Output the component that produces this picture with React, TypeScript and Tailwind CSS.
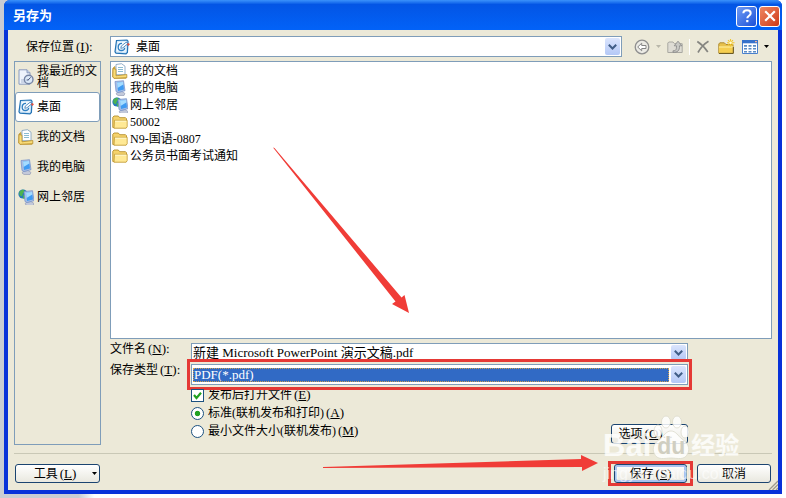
import type { ReactNode } from 'react'
import clsx from 'clsx'

type IconName = 'recent' | 'desktop' | 'documents' | 'computer' | 'network' | 'folder'

const PLACES: { icon: IconName; label: string }[] = [
  { icon: 'recent', label: '我最近的文档' },
  { icon: 'desktop', label: '桌面' },
  { icon: 'documents', label: '我的文档' },
  { icon: 'computer', label: '我的电脑' },
  { icon: 'network', label: '网上邻居' },
]

const FILES: { icon: IconName; label: string }[] = [
  { icon: 'documents', label: '我的文档' },
  { icon: 'computer', label: '我的电脑' },
  { icon: 'network', label: '网上邻居' },
  { icon: 'folder', label: '50002' },
  { icon: 'folder', label: 'N9-国语-0807' },
  { icon: 'folder', label: '公务员书面考试通知' },
]

function Monitor() {
  return (
    <>
      <path d="M5 12.5l5-1 3 2-1 2H6l-2-1.5z" fill="#c3c9da" stroke="#8b93b0" strokeWidth=".6" />
      <path d="M3 1.5l8.5-.8 1.5 10-7 1.8-2-1z" fill="#a9bfe6" stroke="#6d8cc8" strokeWidth=".7" />
      <path d="M5 2.5l6-.6 1 7.7-6 1.3z" fill="#3f9bf2" />
      <path d="M5 2.5l6-.6.3 2.6L5.5 8z" fill="#a5dcff" />
    </>
  )
}

function Icon({ name }: { name: IconName }) {
  return (
    <svg aria-hidden="true" viewBox="0 0 16 16" className="size-4 shrink-0">
      {name === 'recent' && (
        <>
          <path d="M1 .8h8l3 3v11.4H1z" fill="#eef3fc" stroke="#8a9bbd" />
          <path d="M9 .8v3h3" fill="#c7d3ea" stroke="#8a9bbd" />
          <path d="M3 11h4M3 13h4" stroke="#a8b6d1" />
          <circle cx="10.7" cy="10.5" r="4.3" fill="#dce9f8" stroke="#7685a5" strokeWidth="1.4" />
          <path d="M10.2 11l2.4-2.6M10.5 11H8.6" stroke="#47557a" fill="none" />
        </>
      )}
      {name === 'desktop' && (
        <>
          <path d="M2.5 1.5L13 1l1 1.2-.6 11.3-1.4 1.3-10-.6L1 12.8z" fill="#cfe6f8" stroke="#2373b5" strokeWidth="1.2" />
          <path d="M3.7 3l8.4-.5-.5 10.2-8.8-.4z" fill="#f4fafe" />
          <path d="M8 4.4C5.2 4.3 4.2 6.2 4.2 8.2c0 2 1.3 3.3 3.2 3.3s3.2-1 3.3-2.8" fill="none" stroke="#2f7fc2" strokeWidth="1.3" />
          <path d="M6.8 9.3l.5-2.2 5-4 1.4 1.7-4.8 4z" fill="#fff" stroke="#2e73b4" strokeWidth=".8" />
          <path d="M12.8 5l2-1 1.1 1.6-1.7 1.4z" fill="#df5043" />
        </>
      )}
      {name === 'documents' && (
        <>
          <path d="M1 5l2-1.5V13l11 .5v1.7H2L.8 14z" fill="#f0c64c" stroke="#b48a24" strokeWidth=".7" />
          <path d="M4 1.5L9.5.7 13 3.2v8.5H4z" fill="#fff" stroke="#7b9dbc" strokeWidth=".8" />
          <path d="M6 4.5h5M6 6.5h5M6 8.5h5" stroke="#6dabc7" strokeWidth=".8" />
          <path d="M1 5.5l3 .8v6.5l10.8-1.3v3.2L2 15.3.8 14z" fill="#f9dc78" stroke="#b68e2c" strokeWidth=".8" />
        </>
      )}
      {name === 'computer' && <Monitor />}
      {name === 'network' && (
        <>
          <circle cx="5" cy="5" r="4.6" fill="#2678bd" />
          <path d="M1.5 2.3L5 .6l2 1.6-2 2-1 3.2L1.3 6zM5 6l3 1-1 2.4-2 .2z" fill="#4cb450" />
          <g transform="translate(3 1)"><Monitor /></g>
        </>
      )}
      {name === 'folder' && (
        <>
          <path d="M.8 13.5V3.2L2 2h4.3l1.4 1.7h5.8l1 1v9H2z" fill="#f5d36c" stroke="#b58e2b" strokeWidth=".9" />
          <path d="M2.5 6.3h12.7v6.5L14 14.2H2z" fill="#ffe995" stroke="#c19a35" strokeWidth=".8" />
          <path d="M3 7.2h11.3" stroke="#fff8cf" />
        </>
      )}
    </svg>
  )
}

// Accelerator letter shown after a label, e.g. (N)
function Key({ children, tail = '' }: { children: string; tail?: string }) {
  return (
    <span className="pl-0.5 text-[13px]">
      (<span className="underline underline-offset-1">{children}</span>){tail}
    </span>
  )
}

function Chevron() {
  return (
    <span className="pointer-events-none flex w-[15px] shrink-0 items-center justify-center self-stretch rounded-xs bg-linear-to-b from-[#dbe5fd] to-[#b4c8f6]">
      <svg aria-hidden="true" viewBox="0 0 9 6" className="h-[6px] w-[9px]">
        <path d="M.8.8l3.7 3.7L8.2.8" fill="none" stroke="#405d86" strokeWidth="2" />
      </svg>
    </span>
  )
}

function XpButton({ className, children }: { className?: string; children: ReactNode }) {
  return (
    <button
      type="button"
      className={clsx(
        'flex items-center justify-center rounded-[3px] border border-[#1b4470] bg-linear-to-b from-white to-[#e9e8df] leading-4',
        className,
      )}
    >
      {children}
    </button>
  )
}

function DownArrow({ className }: { className?: string }) {
  return (
    <svg aria-hidden="true" viewBox="0 0 5 3" className={clsx('h-[3px] w-[5px] shrink-0', className)}>
      <path d="M0 0h5L2.5 3z" fill="currentColor" />
    </svg>
  )
}

function TitleBar() {
  return (
    <header className="flex h-[30px] items-center justify-between rounded-t-md bg-linear-to-b from-[#3b92fb] via-[#0355e5] via-15% to-[#0262f8] pr-0.5 pl-[9px]">
      <h1 className="pt-0.5 text-[13px] leading-4 font-bold text-white">另存为</h1>
      <div className="flex gap-0.5 pt-0.5">
        <button type="button" aria-label="帮助" className="flex size-[21px] items-center justify-center rounded-[3px] border border-white bg-linear-to-br from-[#6f9af3] to-[#1c4fd8]">
          <svg aria-hidden="true" viewBox="0 0 12 14" className="h-[14px] w-3">
            <path d="M2.3 4.2C2.4 2 4 1.2 6 1.2s3.7 1.1 3.7 3c0 2.6-3.4 2.5-3.4 5.1" fill="none" stroke="#fff" strokeWidth="2" />
            <path d="M5.2 11h2.2v2.2H5.2z" fill="#fff" />
          </svg>
        </button>
        <button type="button" aria-label="关闭" className="flex size-[21px] items-center justify-center rounded-[3px] border border-white bg-linear-to-br from-[#ee8661] to-[#cf3610]">
          <svg aria-hidden="true" viewBox="0 0 12 12" className="size-3">
            <path d="M1.2 1.2l9.6 9.6M10.8 1.2l-9.6 9.6" stroke="#fff" strokeWidth="2.2" />
          </svg>
        </button>
      </div>
    </header>
  )
}

function Toolbar() {
  return (
    <div className="flex w-[150px] shrink-0 items-center pl-3">
      <button type="button" aria-label="后退" className="flex items-center gap-1.5 text-[#b9b7aa]">
        <svg aria-hidden="true" viewBox="0 0 16 16" className="size-4">
          <circle cx="8" cy="8" r="6.8" fill="#ecebe5" stroke="#8f8f8f" strokeWidth="1.3" />
          <path d="M3.7 8l4-3.8v2.3H12v3H7.7v2.3z" fill="#fff" stroke="#858585" />
        </svg>
        <DownArrow />
      </button>
      <button type="button" aria-label="向上一级" className="ml-1.5">
        <svg aria-hidden="true" viewBox="0 0 16 16" className="size-4">
          <path d="M.8 13.5V4l1-1H6l1.5 1.7h7.7v8.8z" fill="#dedcd4" stroke="#a9a8a2" />
          <path d="M6 11.8c3 0 3.5-1 3.5-5H7.2L11 2.2l3.8 4.6h-2.3c.2 5-2 6.7-6.5 6.5z" fill="#c8c8c4" stroke="#858585" strokeWidth=".8" />
        </svg>
      </button>
      <span className="ml-1.5 h-4 w-px bg-white" />
      <button type="button" aria-label="删除" className="ml-1.5">
        <svg aria-hidden="true" viewBox="0 0 14 14" className="size-3.5">
          <path d="M1.3 1.5c4 2.5 7.5 6 10.5 10.5M12.5 1.3C8 4 4.5 8 2 12.5" fill="none" stroke="#858580" strokeWidth="1.7" />
        </svg>
      </button>
      <button type="button" aria-label="新建文件夹" className="ml-2">
        <svg aria-hidden="true" viewBox="0 0 17 16" className="h-4 w-[17px]">
          <path d="M.8 14.2V5l1-1.2h4.5L8 5.5h7v8.7z" fill="#e7c14c" stroke="#b08c30" />
          <path d="M1 7.5h14.3v7H1z" fill="#f5ce50" />
          <path d="M1 8h14" stroke="#fff1a4" />
          <path d="M1 14.4h14.3V8" fill="none" stroke="#61511f" />
          <path d="M12.5 0v7.5M9 3.7h7.5M10 1.2l5 5M15 1.2l-5 5" stroke="#f1c62c" strokeWidth="1.1" />
          <circle cx="12.5" cy="3.7" r="1.3" fill="#fffbd7" />
        </svg>
      </button>
      <button type="button" aria-label="视图" className="ml-[7px] flex items-center gap-1.5 text-black">
        <svg aria-hidden="true" viewBox="0 0 16 14" className="h-[14px] w-4">
          <path d="M.5.5h15v13H.5z" fill="#fff" stroke="#4a80cc" />
          <path d="M0 0h16v3.3H0z" fill="#3672cb" />
          <path d="M13 1h2v1.3h-2z" fill="#f3b39b" />
          <path d="M2 5h3v1.8H2zM6.500 5h3v1.8h-3zM11 5h3v1.8h-3zM2 8h3v1.6H2zM6.500 8h3v1.6h-3zM11 8h3v1.6h-3zM2 11h3v1.5H2zM6.500 11h3v1.5h-3zM11 11h3v1.5h-3z" fill="#5a8cc4" />
        </svg>
        <DownArrow />
      </button>
    </div>
  )
}

function Watermark() {
  return (
    <div aria-hidden="true" className="pointer-events-none absolute right-[43px] bottom-[14px] w-[140px] font-['Liberation_Sans','Noto_Sans_CJK_SC',sans-serif] text-white/80">
      <div className="flex items-end pb-1">
        <span className="text-[31px] leading-7 font-bold">Bai</span>
        <span className="relative flex h-[45px] w-[40px] items-end justify-center">
          <svg viewBox="0 0 40 45" className="absolute inset-0 size-full">
            <g fill="#fff" fillOpacity=".85" stroke="#dcdacb" strokeWidth=".8">
              <ellipse cx="7" cy="16" rx="4" ry="6" />
              <ellipse cx="15" cy="7" rx="4.500" ry="6" />
              <ellipse cx="26" cy="7" rx="4.500" ry="6" />
              <ellipse cx="34" cy="17" rx="4" ry="6" />
              <path d="M20 16c5 0 7 5 11 8 6 4 8 9 6 14-3 8-11 5-17 5s-14 3-17-5c-2-5 0-10 6-14 4-3 6-8 11-8z" />
            </g>
          </svg>
          <span className="relative pb-1 text-[23px] leading-5 font-bold text-[#d0cec0]">du</span>
        </span>
        <span className="text-[24px] leading-7 font-bold">经验</span>
      </div>
      <div className="text-[16px] leading-5 text-white/60">jingyan.baidu.com</div>
    </div>
  )
}

export default function App() {
  return (
    <div className="relative flex min-h-screen flex-col bg-linear-to-r from-[#c9ccd3] from-10% to-white to-12% px-1 pb-1 font-['Liberation_Serif','Noto_Sans_CJK_SC',sans-serif] text-[12px] text-black">
      <main className="flex flex-1 flex-col rounded-t-md bg-[#0831d9]">
        <TitleBar />
        <div className="relative mx-1 mb-1 flex flex-1 flex-col bg-[#ece9d8] px-1.5 pt-1.5 pb-[7px]">
          <div className="flex h-[21px] items-center">
            <label htmlFor="location" className="w-24 shrink-0 pl-3 leading-4">
              保存位置<Key tail=":">I</Key>
            </label>
            <div className="flex h-[21px] min-w-0 flex-1 items-center border border-[#7f9db9] bg-white p-px pl-[3px]">
              <Icon name="desktop" />
              <select id="location" className="min-w-0 flex-1 appearance-none pl-1.5 leading-4 outline-none">
                <option>桌面</option>
              </select>
              <Chevron />
            </div>
            <Toolbar />
          </div>

          <div className="mt-1 flex flex-1 gap-[9px]">
            <nav className="w-[87px] shrink-0 border border-[#7f9db9]">
              {PLACES.map(({ icon, label }) => (
                <button
                  key={icon}
                  type="button"
                  className={clsx(
                    'flex h-[30px] w-full items-center gap-[3px] rounded-[3px] border pl-0.5 text-left leading-3',
                    icon === 'desktop' ? 'border-[#7f9db9] bg-white' : 'border-transparent',
                  )}
                >
                  <Icon name={icon} />
                  <span>{label}</span>
                </button>
              ))}
            </nav>

            <div className="flex min-w-0 flex-1 flex-col">
              <ul className="flex-1 border border-[#7f9db9] bg-white pl-px">
                {FILES.map(({ icon, label }) => (
                  <li key={label} className="flex h-[17px] items-center gap-0.5 leading-4">
                    <Icon name={icon} />
                    {label}
                  </li>
                ))}
              </ul>

              <div className="mt-1 flex items-start pr-[84px]">
                <label htmlFor="filename" className="w-[81px] shrink-0 leading-3">
                  文件名<Key tail=":">N</Key>
                </label>
                <div className="flex h-[19px] min-w-0 flex-1 border border-[#7f9db9] bg-white p-px">
                  <input id="filename" defaultValue="新建 Microsoft PowerPoint 演示文稿.pdf" className="min-w-0 flex-1 text-[13px] leading-4 outline-none" />
                  <Chevron />
                </div>
              </div>

              <div className="mt-0.5 flex items-start pr-[84px]">
                <label htmlFor="filetype" className="w-[81px] shrink-0 leading-3">
                  保存类型<Key tail=":">T</Key>
                </label>
                <div className="relative flex h-[21px] min-w-0 flex-1 items-center gap-0.5 border border-[#7f9db9] bg-white p-px">
                  <select id="filetype" className="h-[14px] min-w-0 flex-1 appearance-none border border-dotted border-[#d0a050] bg-[#316ac5] text-[13px] leading-3 text-white outline-none">
                    <option>PDF(*.pdf)</option>
                  </select>
                  <Chevron />
                  <span className="pointer-events-none absolute -inset-x-[5px] -inset-y-1.5 border-3 border-[#e53935]" />
                </div>
              </div>

              <div className="mt-px mb-px flex items-end justify-between pr-[84px] pl-[81px]">
                <div className="pb-1">
                  <label className="flex h-[18px] items-center gap-1">
                    <span className="relative flex size-[13px]">
                      <input type="checkbox" defaultChecked className="peer size-[13px] appearance-none border border-[#1c5180] bg-white" />
                      <svg aria-hidden="true" viewBox="0 0 13 13" className="pointer-events-none absolute inset-0 hidden peer-checked:block">
                        <path d="M3 6l2.5 3L10 3.8" fill="none" stroke="#21a121" strokeWidth="2.2" />
                      </svg>
                    </span>
                    <span className="leading-4">发布后打开文件<Key>E</Key></span>
                  </label>
                  <label className="flex h-[18px] items-center gap-1">
                    <input type="radio" name="quality" defaultChecked className="size-[13px] appearance-none rounded-full border border-[#1c5180] bg-white checked:bg-radial checked:from-[#21a121] checked:from-30% checked:to-white checked:to-40%" />
                    <span className="leading-4">标准(联机发布和打印)<Key>A</Key></span>
                  </label>
                  <label className="flex h-[18px] items-center gap-1">
                    <input type="radio" name="quality" className="size-[13px] appearance-none rounded-full border border-[#1c5180] bg-white checked:bg-radial checked:from-[#21a121] checked:from-30% checked:to-white checked:to-40%" />
                    <span className="leading-4">最小文件大小(联机发布)<Key>M</Key></span>
                  </label>
                </div>
                <XpButton className="h-[20px] w-[77px] pr-2">选项<Key tail="...">O</Key></XpButton>
              </div>
            </div>
          </div>

          <footer className="mt-2 flex items-center border-t border-[#c9c8b6] px-px pt-2.5">
            <XpButton className="h-[19px] w-[85px] pl-4">
              工具<Key>L</Key>
              <DownArrow className="ml-4" />
            </XpButton>
            <div className="relative ml-auto">
              <XpButton className="h-[19px] w-[73px] ring-2 ring-[#a9c3f0] ring-inset">保存<Key>S</Key></XpButton>
              <span className="pointer-events-none absolute -inset-x-1.5 -inset-y-[3px] border-3 border-[#e53935]" />
            </div>
            <XpButton className="ml-2.5 h-[19px] w-[74px]">取消</XpButton>
          </footer>

          <svg aria-hidden="true" viewBox="0 0 10 10" className="absolute right-0 bottom-0 size-2.5">
            <path d="M1 10l9-9M4.5 10L10 4.5M8 10l2-2" stroke="#9c9a8b" strokeWidth="1.3" />
          </svg>
        </div>
      </main>

      <Watermark />
      <svg aria-hidden="true" className="pointer-events-none absolute inset-0 size-full" fill="#f03c37">
        <path d="M273 147.500L274.500 148 401.500 297.500 404.500 295 409 313 392 304 395.500 301.500z" />
        <path d="M323 467L581 459V455L598 463 582 471V467L323 468z" />
      </svg>
    </div>
  )
}
